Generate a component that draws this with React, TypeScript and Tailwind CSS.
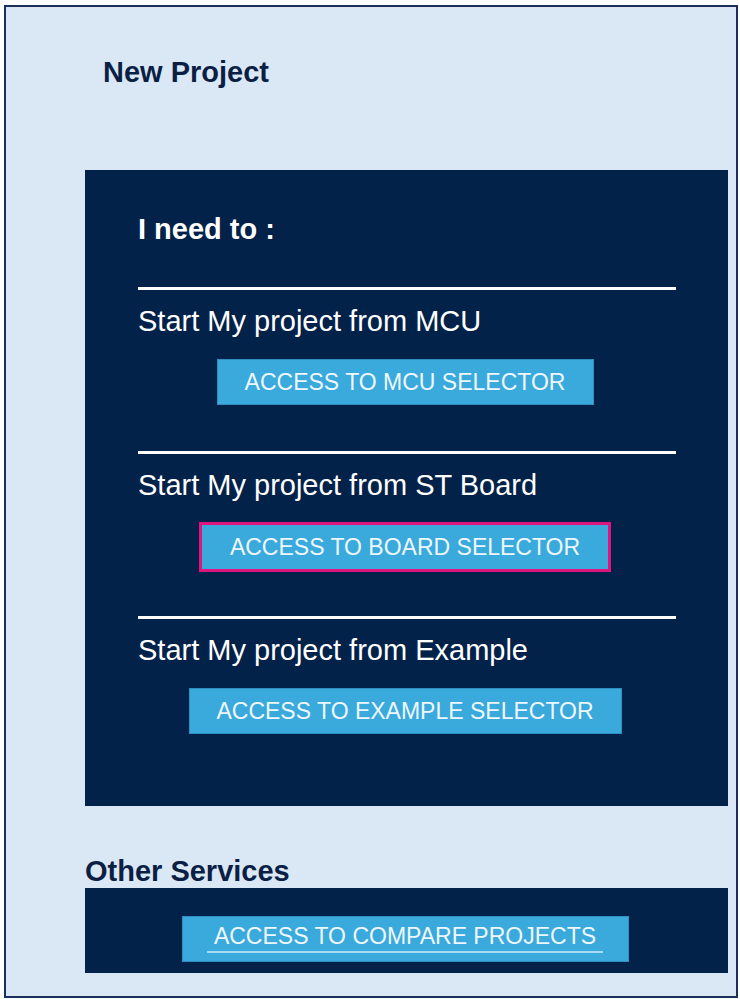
const font = { fontFamily: '"Liberation Sans", Arial, sans-serif' };

type Section = {
  label: string;
  button: string;
  width: string;
  active?: boolean;
};

const sections: Section[] = [
  { label: "Start My project from MCU", button: "ACCESS TO MCU SELECTOR", width: "w-[377px]" },
  { label: "Start My project from ST Board", button: "ACCESS TO BOARD SELECTOR", width: "w-[412px]", active: true },
  { label: "Start My project from Example", button: "ACCESS TO EXAMPLE SELECTOR", width: "w-[433px]" },
];

function AccessButton({ text, width, active }: { text: string; width: string; active?: boolean }) {
  return (
    <button
      type="button"
      className={`flex items-center justify-center bg-[#3aa9dc] text-[23px] leading-none text-[#eef7ff] ${width} ${
        active ? "h-[50px] border-[3px] border-[#e0157f]" : "h-[46px] border border-[#2f8fc0]"
      }`}
    >
      {text}
    </button>
  );
}

export default function App() {
  return (
    <div className="h-[999px] w-[740px] bg-white pl-[4px] pt-[5px]" style={font}>
      <div className="flex h-[993px] w-[734px] flex-col border-2 border-[#1a2f5a] bg-[#dae8f5]">
        <h1 className="ml-[97px] mt-[51px] text-[29px] font-bold leading-none text-[#0b1f45]">New Project</h1>

        <div className="ml-[79px] mt-[83px] flex h-[636px] w-[643px] flex-col bg-[#03224a] pl-[53px]">
          <h2 className="mt-[45px] text-[29px] font-bold leading-none text-white">I need to :</h2>
          <div className="mt-[43px] flex flex-col">
            {sections.map((s, i) => (
              <div key={s.label} className={i === 0 ? "" : sections[i - 1].active ? "mt-[44px]" : "mt-[46px]"}>
                <div className="h-[3px] w-[538px] bg-white" />
                <div className="mt-[17px] text-[29px] leading-none text-white">{s.label}</div>
                <div className={`flex w-[534px] justify-center ${s.active ? "mt-[22px]" : "mt-[23px]"}`}>
                  <AccessButton text={s.button} width={s.width} active={s.active} />
                </div>
              </div>
            ))}
          </div>
        </div>

        <h2 className="ml-[79px] mt-[51px] text-[29px] font-bold leading-none text-[#0b1f45]">Other Services</h2>
        <div className="ml-[79px] mt-[2px] flex h-[85px] w-[643px] items-start justify-center bg-[#03224a] pt-[28px]">
          <button
            type="button"
            className="-ml-[3px] flex h-[46px] w-[447px] items-center justify-center border border-[#2f8fc0] bg-[#3aa9dc] text-[23px] leading-none text-[#eef7ff]"
          >
            <span className="border-b-2 border-[#a8dcf5] px-[7px] pb-[3px]">ACCESS TO COMPARE PROJECTS</span>
          </button>
        </div>
      </div>
    </div>
  );
}
